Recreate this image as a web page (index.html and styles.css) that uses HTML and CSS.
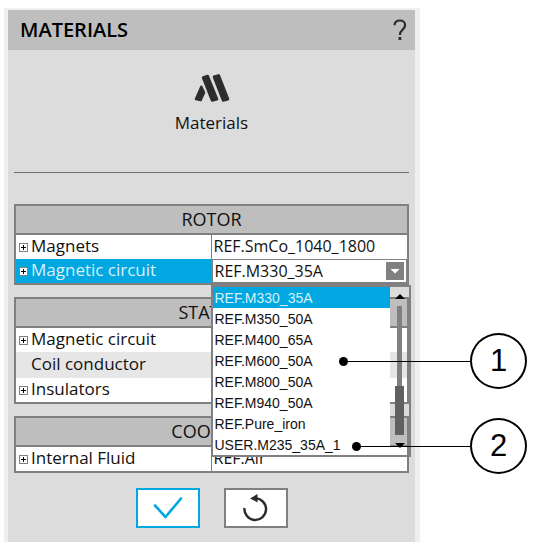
FILE: index.html
```
<!DOCTYPE html>
<html lang="en">
<head>
  <meta charset="UTF-8">
  <meta name="viewport" content="width=device-width, initial-scale=1.0">
  <title>Materials</title>
  <link rel="stylesheet" href="styles.css">
</head>
<body>
  <main class="panel">
    <header class="panel-header">
      <h1>MATERIALS</h1>
      <button class="help" type="button" aria-label="Help">
        <svg width="14" height="22" viewBox="0 0 14 22" fill="none" stroke="#2b2b2b" stroke-width="2.2">
          <path d="M1.500 6.200C1.700 3 3.900 1.500 6.800 1.500c3.100 0 5.300 1.800 5.300 4.500 0 2.300-1.100 3.400-2.700 4.900C7.600 12.500 6.900 13.200 6.900 16"/>
          <path d="M6.900 18v3" stroke-width="2.800"/>
        </svg>
      </button>
    </header>

    <div class="category">
      <svg width="36" height="30" viewBox="0 0 36 30" fill="#2d2d2d" stroke="#2d2d2d" stroke-width="3" stroke-linejoin="round">
        <path d="M9.300 4.600L13.600 3.200L22.800 26L18.200 27.200Z"/>
        <path d="M20.200 4L24.600 2.600L33.800 26L29.200 27.200Z"/>
        <path d="M7.300 13.700L10.100 19.500L6.600 27.200L2 26Z" stroke-width="2.400"/>
      </svg>
      <p>Materials</p>
    </div>

    <form class="groups">
      <table class="group">
        <thead>
          <tr><th colspan="2">ROTOR</th></tr>
        </thead>
        <tbody>
          <tr>
            <td class="name"><button class="expand" type="button" aria-label="Expand"></button>Magnets</td>
            <td>REF.SmCo_1040_1800</td>
          </tr>
          <tr class="active">
            <td class="name"><button class="expand" type="button" aria-label="Expand"></button><label for="circuit">Magnetic circuit</label></td>
            <td class="combo">
              <select id="circuit" class="combo-value">
                <option>REF.M330_35A</option>
              </select>
              <svg class="combo-arrow" width="18" height="18" viewBox="0 0 18 18">
                <rect width="18" height="18" fill="#808080"/>
                <path d="M4.500 7h9L9 11.500z" fill="#fff"/>
              </svg>
              <div class="dropdown">
                <select class="dropdown-list" size="8" aria-label="Available materials">
                  <option selected>REF.M330_35A</option>
                  <option>REF.M350_50A</option>
                  <option>REF.M400_65A</option>
                  <option>REF.M600_50A</option>
                  <option>REF.M800_50A</option>
                  <option>REF.M940_50A</option>
                  <option>REF.Pure_iron</option>
                  <option>USER.M235_35A_1</option>
                </select>
                <div class="scroll">
                  <span class="scroll-up"></span>
                  <span class="scroll-track"></span>
                  <span class="scroll-thumb"></span>
                  <span class="scroll-down"></span>
                </div>
              </div>
            </td>
          </tr>
        </tbody>
      </table>

      <table class="group">
        <thead>
          <tr><th colspan="2">STATOR</th></tr>
        </thead>
        <tbody>
          <tr>
            <td class="name"><button class="expand" type="button" aria-label="Expand"></button>Magnetic circuit</td>
            <td></td>
          </tr>
          <tr class="shaded">
            <td class="name no-expand">Coil conductor</td>
            <td></td>
          </tr>
          <tr>
            <td class="name"><button class="expand" type="button" aria-label="Expand"></button>Insulators</td>
            <td></td>
          </tr>
        </tbody>
      </table>

      <table class="group">
        <thead>
          <tr><th colspan="2">COOLING</th></tr>
        </thead>
        <tbody>
          <tr>
            <td class="name"><button class="expand" type="button" aria-label="Expand"></button>Internal Fluid</td>
            <td>REF.Air</td>
          </tr>
        </tbody>
      </table>

      <div class="actions">
        <button class="action ok" type="button" aria-label="Validate">
          <svg width="30" height="24" viewBox="0 0 30 24" fill="none" stroke="#00a7e1" stroke-width="2.600" stroke-linecap="round" stroke-linejoin="round">
            <path d="M2 9.500L12.500 21L28 2.500"/>
          </svg>
        </button>
        <button class="action" type="button" aria-label="Reset">
          <svg width="28" height="30" viewBox="0 0 28 30">
            <path d="M2.500 15A10.800 10.800 0 1 0 13.500 5.400" fill="none" stroke="#2b2b2b" stroke-width="2.400"/>
            <path d="M8 5.400L15.500 1V9.400z" fill="#2b2b2b"/>
          </svg>
        </button>
      </div>
    </form>
  </main>

  <aside class="callouts">
    <div class="callout callout-one">1</div>
    <div class="callout callout-two">2</div>
  </aside>
</body>
</html>
```
FILE: styles.css
```
* {
  box-sizing: border-box;
}

body {
  margin: 0;
  padding: 8px 17px 8px 4px;
  display: flex;
  align-items: flex-start;
  gap: 50px;
  background: #fff;
  color: #111;
  font-family: "Open Sans", "Noto Sans", sans-serif;
  font-size: 17px;
}

button {
  padding: 0;
  border: none;
  background: none;
  cursor: pointer;
}

svg {
  display: block;
}

.panel {
  flex: 1;
  min-width: 0;
  background: #dcdcdc;
  border: solid #efefef;
  border-width: 2px 5px 0 4px;
}

.panel-header {
  display: flex;
  align-items: center;
  justify-content: space-between;
  height: 40px;
  padding: 0 8px 0 12px;
  background: #bebebe;
}

.panel-header h1 {
  margin: 0;
  font-size: 20px;
  font-weight: 600;
  line-height: 40px;
  color: #000;
}

.category {
  display: flex;
  flex-direction: column;
  align-items: center;
  gap: 8px;
  height: 123px;
  margin: 0 6px;
  padding-top: 23px;
  border-bottom: 1px solid #6e6e6e;
}

.category p {
  margin: 0;
  line-height: 24px;
}

.groups {
  padding: 31px 6px 14px;
}

.group {
  width: 100%;
  margin-bottom: 12px;
  border: 2px solid #808080;
  border-spacing: 0;
  table-layout: fixed;
  background: #fff;
}

.group th {
  height: 29px;
  padding: 0;
  border-bottom: 2px solid #808080;
  background: #bebebe;
  font-size: 18px;
  font-weight: 400;
  line-height: 27px;
}

.group td {
  height: 24px;
  padding: 0 2px 2px;
  font-size: 16px;
  line-height: 22px;
  white-space: nowrap;
}

.group .name {
  padding-left: 3px;
  border-right: 1px solid #808080;
  font-size: 17px;
}

.group .no-expand {
  padding-left: 15px;
}

.group .shaded td {
  height: 26px;
  background: #e6e6e6;
}

.active .name {
  background: #00a7e1;
}

.active label {
  color: #d8f0fa;
}

/* small plus box in front of a row */
.expand {
  width: 9px;
  height: 9px;
  margin-right: 3px;
  border: 1px solid #808080;
  vertical-align: 1px;
  background:
    linear-gradient(#000, #000) center / 5px 1px no-repeat,
    linear-gradient(#000, #000) center / 1px 5px no-repeat,
    #fff;
}

.group .combo {
  position: relative;
  padding: 0;
}

.combo-value {
  appearance: none;
  display: block;
  width: 100%;
  height: 24px;
  padding: 0 22px 0 2px;
  border: 1px solid #808080;
  border-radius: 0;
  background: #fff;
  color: #111;
  font: inherit;
  line-height: 22px;
}

.combo-arrow {
  position: absolute;
  top: 3px;
  right: 3px;
  pointer-events: none;
}

.dropdown {
  position: absolute;
  z-index: 1;
  top: 26px;
  left: -1px;
  right: -4px;
  display: flex;
  border: 2px solid #808080;
}

.dropdown-list {
  appearance: none;
  flex: 1;
  min-width: 0;
  height: 168px;
  padding: 0;
  border: none;
  border-radius: 0;
  outline: none;
  overflow: hidden;
  background: #fff;
  color: #111;
  font: 14px "Liberation Sans", Arial, sans-serif;
}

.dropdown-list option {
  height: 21px;
  min-height: 21px;
  padding: 3px 2px 0;
}

.dropdown-list option:checked {
  background: #00a7e1 linear-gradient(#00a7e1, #00a7e1);
  color: #d8f0fa;
}

.scroll {
  position: relative;
  display: flex;
  flex-direction: column;
  align-items: center;
  width: 19px;
  padding: 7px 0;
}

.scroll-up,
.scroll-down {
  border: solid transparent;
  border-width: 0 5px;
}

.scroll-up {
  border-bottom: 5px solid #000;
}

.scroll-down {
  border-top: 5px solid #000;
}

.scroll-track {
  flex: 1;
  width: 5px;
  margin-top: 7px;
  background: #808080;
}

.scroll-thumb {
  width: 9px;
  height: 49px;
  margin-bottom: 8px;
  background: #606060;
}

.actions {
  display: flex;
  justify-content: center;
  gap: 24px;
  padding-top: 3px;
}

.action {
  display: flex;
  align-items: center;
  justify-content: center;
  width: 64px;
  height: 40px;
  border: 2px solid #808080;
  background: #fff;
}

.action.ok {
  border-color: #00a7e1;
}

.callouts {
  display: flex;
  flex-direction: column;
  gap: 29px;
  padding-top: 325px;
}

.callout {
  position: relative;
  width: 57px;
  height: 56px;
  border: 2px solid #000;
  border-radius: 50%;
  color: #000;
  font: 31px/52px "Liberation Sans", Arial, sans-serif;
  text-align: center;
}

/* leader line and its end dot reach back over the list */
.callout::before,
.callout::after {
  content: "";
  position: absolute;
  z-index: 2;
  background: #000;
}

.callout::before {
  top: 26px;
  right: 100%;
  width: 127px;
  height: 1px;
}

.callout::after {
  top: 22px;
  right: calc(100% + 124px);
  width: 9px;
  height: 9px;
  border-radius: 50%;
}

.callout-two::before {
  width: 114px;
}

.callout-two::after {
  right: calc(100% + 111px);
}
```
